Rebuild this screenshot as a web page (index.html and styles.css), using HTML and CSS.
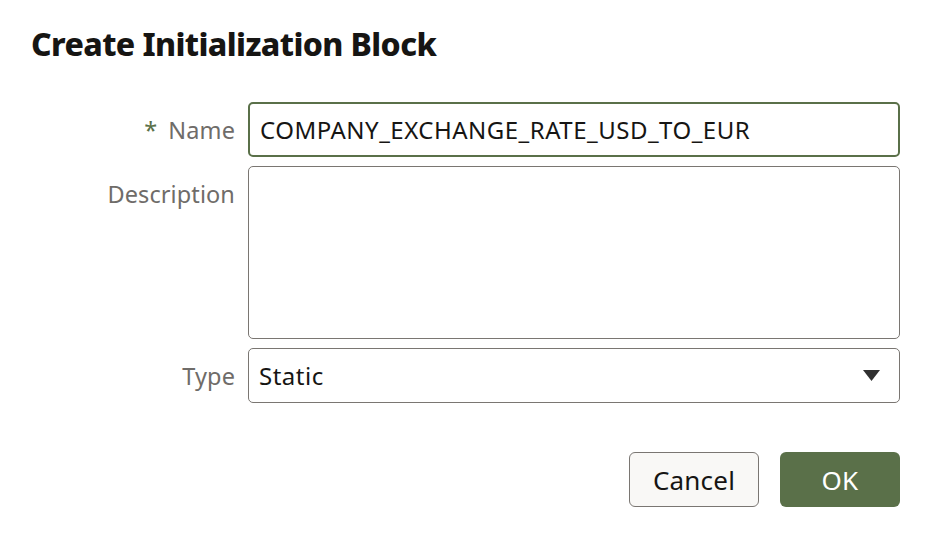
FILE: index.html
```html
<!DOCTYPE html>
<html lang="en">
<head>
<meta charset="utf-8">
<title>Create Initialization Block</title>
<link rel="stylesheet" href="styles.css">
</head>
<body>
<div class="dialog">
  <h1 class="title">Create Initialization Block</h1>
  <form class="form">
    <div class="row">
      <label class="label" for="name"><span class="req">*</span>Name</label>
      <input class="field field-active" id="name" type="text" value="COMPANY_EXCHANGE_RATE_USD_TO_EUR">
    </div>
    <div class="row row-top">
      <label class="label label-top" for="desc">Description</label>
      <textarea class="field area" id="desc"></textarea>
    </div>
    <div class="row">
      <label class="label" for="type">Type</label>
      <div class="field select" id="type">
        <span class="select-value">Static</span>
        <svg class="caret" width="17" height="11" viewBox="0 0 17 11"><path d="M0 0H17L8.5 11Z" fill="#303030"/></svg>
      </div>
    </div>
    <div class="actions">
      <button type="button" class="btn btn-secondary">Cancel</button>
      <button type="button" class="btn btn-primary">OK</button>
    </div>
  </form>
</div>
</body>
</html>
```

FILE: styles.css
```css
* { box-sizing: border-box; }
html, body { margin: 0; padding: 0; background: #ffffff; }
body {
  font-family: "Noto Sans", "Open Sans", "Liberation Sans", sans-serif;
  color: #161513;
}
.dialog {
  width: 928px;
  padding: 24px 28px 0 31px;
}
.title {
  margin: 0;
  font-size: 32px;
  font-weight: 800;
  line-height: 40px;
  letter-spacing: -0.6px;
  color: #161513;
}
.form {
  margin-top: 38px;
  display: flex;
  flex-direction: column;
  gap: 9px;
}
.row {
  display: flex;
  align-items: center;
  gap: 13px;
}
.row-top { align-items: flex-start; }
.label {
  width: 204px;
  text-align: right;
  font-size: 23.5px;
  letter-spacing: 0.1px;
  color: #6f6c69;
  flex: none;
}
.label-top { padding-top: 12px; }
.req {
  color: #5a7049;
  margin-right: 11px;
}
.field {
  width: 652px;
  height: 55px;
  border: 1.5px solid #7a7672;
  border-radius: 5px;
  background: #fff;
  font-family: inherit;
  font-size: 24px;
  letter-spacing: 0.5px;
  color: #161513;
  padding: 0 10px;
  outline: none;
  margin: 0;
}
.field-active {
  border: 2px solid #5a7049;
}
.area {
  height: 173px;
  resize: none;
  display: block;
}
.select {
  display: flex;
  align-items: center;
  justify-content: space-between;
  padding-right: 19px;
}
.caret { display: block; }
.actions {
  display: flex;
  justify-content: flex-end;
  gap: 21px;
  margin-top: 40px;
  width: 869px;
}
.btn {
  height: 55px;
  border-radius: 6px;
  font-family: inherit;
  font-size: 26px;
  letter-spacing: 0.2px;
  cursor: pointer;
  padding: 0;
}
.btn-secondary {
  width: 130px;
  background: #f9f8f6;
  border: 1.5px solid #7a7672;
  color: #161513;
}
.btn-primary {
  width: 120px;
  background: #5a7049;
  border: none;
  color: #ffffff;
}
```
